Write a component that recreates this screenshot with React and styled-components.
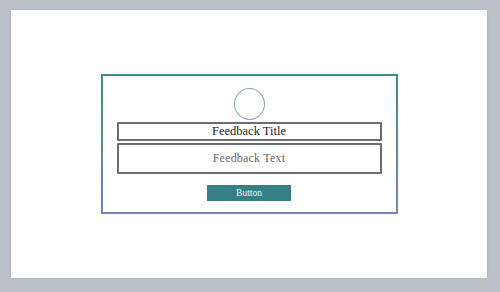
import React from 'react';
import styled, {createGlobalStyle} from "styled-components";

const GlobalStyle = createGlobalStyle`
  * {
    box-sizing: border-box;
  }

  html, body, #root {
    height: 100%;
  }

  body {
    margin: 0;
    padding: 10px 13px 14px 11px;
    background: #b9c0c7;
    font-family: "Liberation Serif", "DejaVu Serif", serif;
  }
`

const App = () => {
    return (
        <>
            <GlobalStyle/>
            <Page>
                <Card>
                    <Avatar/>
                    <Field height={19}>
                        <Title>Feedback Title</Title>
                    </Field>
                    <Field height={31}>
                        <Text>Feedback Text</Text>
                    </Field>
                    <Button>Button</Button>
                </Card>
            </Page>
        </>
    );
};

const Page = styled.div`
  height: 100%;
  background: #ffffff;
  box-shadow: 0 0 2px rgba(0, 0, 0, .12);
  display: flex;
  align-items: center;
  justify-content: center;
`

const Card = styled.div`
  width: 297px;
  height: 140px;
  border: 2px solid;
  border-image: linear-gradient(180deg, #3f8b8a, #7a84b6) 1;
  padding: 12px 14px 0;
  display: flex;
  flex-direction: column;
  align-items: center;
`

const Avatar = styled.div`
  width: 31px;
  height: 32px;
  border-radius: 50%;
  border: 1px solid #8ea2b8;
  margin-bottom: 2px;
`

const Field = styled.div`
  width: 100%;
  height: ${p => p.height}px;
  border: 2px solid #6c6c6c;
  border-radius: 1px;
  display: flex;
  align-items: center;
  justify-content: center;
  margin-bottom: 2px;
`

const Title = styled.span`
  font-family: "Liberation Serif", serif;
  font-size: 12.5px;
  color: #1e1e1e;
`

const Text = styled.span`
  font-family: "Liberation Serif", serif;
  font-size: 12px;
  letter-spacing: 0.2px;
  color: #686868;
`

const Button = styled.button`
  margin-top: 9px;
  width: 84px;
  height: 16px;
  padding: 0;
  border: none;
  background: #377f86;
  color: #f4f7f7;
  font-family: "Liberation Serif", serif;
  font-size: 9.5px;
`

export default App;
